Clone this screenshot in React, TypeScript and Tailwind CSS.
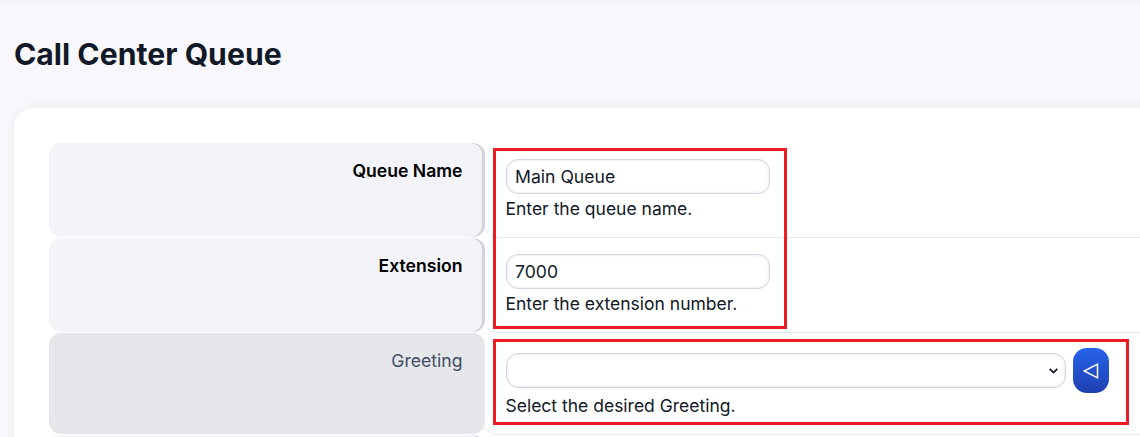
function Row({ label, hint, value, strong = true, select = false, rowClass }: { label: string; hint: string; value?: string; strong?: boolean; select?: boolean; rowClass: string }) {
  return (
    <div className={`flex ${rowClass}`}>
      <div
        className={`w-[436px] shrink-0 rounded-xl pt-[15px] pr-[22.5px] text-right text-[17.6px] leading-[26px] ${
          strong
            ? "bg-[#f3f4f8] font-semibold text-black shadow-[inset_-3px_0_0_#d1d5db]"
            : "bg-[#e5e7eb] font-normal text-[#414d63]"
        }`}
      >
        {label}
      </div>
      <div className={`-mb-px flex-1 rounded-bl-xl border-b border-[#e5e7eb] pl-[21px] ${select ? "pt-[15px]" : "pt-[16px]"}`}>
        {select ? (
          <div className="flex items-center gap-[7px]">
            <div className="relative h-[35px] w-[560px]">
              <select className="h-[35px] w-full appearance-none rounded-xl border border-[#d0d3e2] bg-white pl-2 text-[16px] text-[#111827] shadow-[inset_0_0_3px_rgba(100,110,160,0.2)]">
                <option></option>
              </select>
              <svg className="pointer-events-none absolute right-[8px] top-[15px]" width="9" height="6" viewBox="0 0 9 6" fill="none" stroke="#111827" strokeWidth="1.7">
                <path d="M0.7 0.8L4.5 4.6L8.3 0.8" />
              </svg>
            </div>
            <button className="flex h-[45px] w-[36px] items-center justify-center rounded-[14px] bg-gradient-to-b from-[#2563eb] to-[#1e40af]">
              <svg width="18" height="18" viewBox="0 0 18 18" fill="none" stroke="white" strokeWidth="1.5" strokeLinejoin="miter">
                <path d="M15.5 2.2V15.8L2.2 9Z" />
              </svg>
            </button>
          </div>
        ) : (
          <input
            readOnly
            value={value}
            className="block h-[35px] w-[264px] rounded-xl border border-[#d0d3e2] bg-white px-[8px] text-[17.6px] text-[#111827] shadow-[inset_0_0_3px_rgba(100,110,160,0.2)] outline-none"
          />
        )}
        <p className={`-ml-[0.5px] text-[17.5px] leading-[26px] text-[#111827] ${select ? "" : "mt-[2px]"}`}>{hint}</p>
      </div>
    </div>
  );
}

export default function App() {
  return (
    <div className="relative h-[437px] w-[1140px] overflow-hidden bg-[#f8f8fc] font-['Inter',sans-serif]">
      <div className="h-[2px] bg-[#f3f4f6]" />
      <h1 className="ml-[14px] mt-[32px] text-[30.2px] font-bold leading-[40px] text-[#111827]">Call Center Queue</h1>
      <div className="ml-[14px] mt-[34px] h-[400px] w-[1200px] rounded-t-[20px] bg-white pl-[35px] pt-[35px] shadow-[0_0_12px_rgba(0,0,0,0.06)]">
        <div className="flex flex-col gap-[1px]">
          <Row rowClass="h-[94px]" label="Queue Name" value="Main Queue" hint="Enter the queue name." />
          <Row rowClass="h-[94px]" label="Extension" value="7000" hint="Enter the extension number." />
          <Row rowClass="h-[101px]" label="Greeting" strong={false} select hint="Select the desired Greeting." />
          <Row rowClass="h-[94px]" label="" hint="" value="" />
        </div>
      </div>
      <div className="absolute left-[493px] top-[148px] h-[181px] w-[294px] border-[3px] border-[#ed1c24]" />
      <div className="absolute left-[493px] top-[339px] h-[86px] w-[636px] border-[3px] border-[#ed1c24]" />
    </div>
  );
}
